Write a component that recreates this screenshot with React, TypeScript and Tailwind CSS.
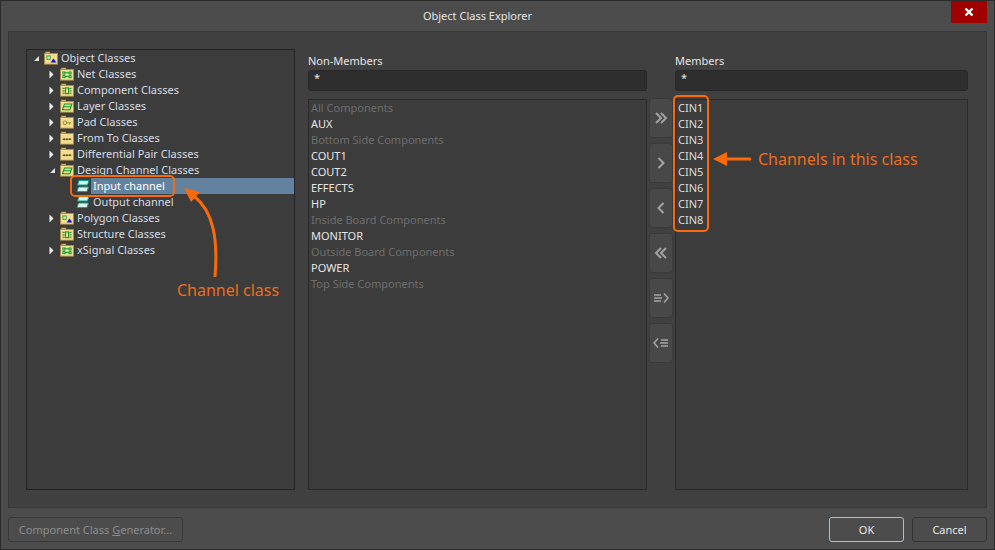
import type { ReactNode } from "react";

const font = "font-['Noto_Sans','Liberation_Sans',sans-serif]";

type Glyph = "poly" | "net" | "comp" | "layer" | "pad" | "fromto";

// little drawings inside the yellow folder icons
function FolderGlyph({ kind }: { kind: Glyph }) {
  if (kind === "poly")
    return (
      <>
        <rect x="3.5" y="5.5" width="4" height="4" fill="#dff5c0" stroke="#089a2a" />
        <path d="M8 13.5 L11.5 8.5 L15 13.5 Z" fill="#1010d0" />
      </>
    );
  if (kind === "net")
    return (
      <>
        <rect x="2" y="4" width="13" height="9.5" fill="#d3e89a" />
        <rect x="3.5" y="5.5" width="2.5" height="2.5" fill="none" stroke="#008a20" />
        <rect x="11" y="5.5" width="2.5" height="2.5" fill="none" stroke="#008a20" />
        <rect x="3.5" y="10" width="2.5" height="2.5" fill="none" stroke="#008a20" />
        <rect x="11" y="10" width="2.5" height="2.5" fill="none" stroke="#008a20" />
        <path d="M6 6.5 H11 M6 11 H11" stroke="#008a20" />
      </>
    );
  if (kind === "comp")
    return (
      <>
        <rect x="6.5" y="5.5" width="4" height="7" fill="none" stroke="#008a20" strokeWidth="1.2" />
        <path d="M3 6 H5.5 M3 9 H5.5 M3 12 H5.5 M11.5 6 H14 M11.5 9 H14 M11.5 12 H14" stroke="#008a20" strokeWidth="1.2" />
      </>
    );
  if (kind === "layer")
    return <path d="M5.5 5.5 H14.5 L12 12.5 H3 Z M4 9 H13.5" fill="none" stroke="#089a2a" strokeWidth="1.3" />;
  if (kind === "pad")
    return (
      <>
        <circle cx="6" cy="9" r="2.2" fill="none" stroke="#8a7a20" />
        <path d="M8 9 H13.5 M11.5 9 V11" stroke="#8a7a20" />
      </>
    );
  return (
    <>
      <path d="M3 9.5 H14" stroke="#6d6420" />
      <rect x="4" y="8.5" width="2" height="2" fill="#4d4a18" />
      <rect x="7.5" y="8.5" width="2" height="2" fill="#4d4a18" />
      <rect x="11" y="8.5" width="2" height="2" fill="#4d4a18" />
    </>
  );
}

function Folder({ kind }: { kind: Glyph }) {
  return (
    <svg width="14" height="14" viewBox="0 0 17 16" className="shrink-0">
      <path d="M1.5 3 V0.5 H7 L8 3 Z" fill="#c9a860" />
      <rect x="0.5" y="2.5" width="16" height="13" fill="#f3dc90" stroke="#a98a42" />
      <FolderGlyph kind={kind} />
    </svg>
  );
}

function ChannelIcon() {
  return (
    <svg width="14" height="12" viewBox="0 0 14 12" className="shrink-0">
      <path d="M3 0.5 H13 L11.5 5 H1.5 Z" fill="#d8f4ee" stroke="#10a08c" />
      <path d="M2.5 7 H12.5 L11 11.5 H1 Z" fill="#d8f4ee" stroke="#10a08c" />
    </svg>
  );
}

function Arrow({ open }: { open?: boolean }) {
  return open ? (
    <svg width="7" height="7" viewBox="0 0 7 7" className="shrink-0">
      <path d="M6 1 V6 H1 Z" fill="#e2e2e2" />
    </svg>
  ) : (
    <svg width="5" height="9" viewBox="0 0 5 9" className="shrink-0">
      <path d="M0.5 0.5 L4.5 4.5 L0.5 8.5 Z" fill="#f0f0f0" />
    </svg>
  );
}

function TreeRow({ label, kind, arrow, open, indent }: { label: string; kind: Glyph; arrow?: boolean; open?: boolean; indent: string }) {
  return (
    <div className={`h-4 flex items-center ${indent}`}>
      <span className="w-[11px] flex items-center">{arrow && <Arrow open={open} />}</span>
      <Folder kind={kind} />
      <span className="ml-[3px] whitespace-nowrap">{label}</span>
    </div>
  );
}

const nonMembers: [string, boolean][] = [
  ["All Components", true],
  ["AUX", false],
  ["Bottom Side Components", true],
  ["COUT1", false],
  ["COUT2", false],
  ["EFFECTS", false],
  ["HP", false],
  ["Inside Board Components", true],
  ["MONITOR", false],
  ["Outside Board Components", true],
  ["POWER", false],
  ["Top Side Components", true],
];

const members = ["CIN1", "CIN2", "CIN3", "CIN4", "CIN5", "CIN6", "CIN7", "CIN8"];

function MoveButton({ children }: { children: ReactNode }) {
  return (
    <button className="w-6 h-10 rounded-[3px] bg-[#484848] border border-[#3a3a3a] flex items-center justify-center">
      <svg width="16" height="14" viewBox="0 0 16 14" fill="none" stroke="#a3a3a3" strokeWidth="2">
        {children}
      </svg>
    </button>
  );
}

function Filter() {
  return (
    <div className="h-[21px] rounded-[3px] bg-[#2e2e2e] border border-[#282828] pl-[5px] text-[#e8e8e8] leading-[14px]">*</div>
  );
}

export default function App() {
  return (
    <div className={`w-[995px] h-[550px] relative overflow-hidden flex flex-col bg-[#4c4c4c] border-x border-b border-[#2b2b2b] text-[11px] text-[#dcdcdc] ${font}`}>
      <div className="h-[31px] shrink-0 relative flex items-center justify-center border-t border-[#2b2b2b] pr-[40px] pt-px text-[#e4e4e4] text-[11px]">
        Object Class Explorer
        <div className="absolute right-[7px] top-0 w-9 h-[22px] bg-[#a00000] flex items-center justify-center">
          <svg width="10" height="10" viewBox="0 0 10 10">
            <path d="M1.5 1.5 L8.5 8.5 M8.5 1.5 L1.5 8.5" stroke="#fff" strokeWidth="2.4" />
          </svg>
        </div>
      </div>

      <div className="mx-[7px] h-[477px] bg-[#404040] border border-[#383838] flex pl-[17px] pt-[17px] pb-[17px] pr-[18px]">
        {/* tree */}
        <div className="w-[269px] h-[441px] shrink-0 border border-[#242424] bg-[#3c3c3c] text-[#d5dce4]">
          <TreeRow label="Object Classes" kind="poly" arrow open indent="pl-[6px]" />
          <TreeRow label="Net Classes" kind="net" arrow indent="pl-[22px]" />
          <TreeRow label="Component Classes" kind="comp" arrow indent="pl-[22px]" />
          <TreeRow label="Layer Classes" kind="layer" arrow indent="pl-[22px]" />
          <TreeRow label="Pad Classes" kind="pad" arrow indent="pl-[22px]" />
          <TreeRow label="From To Classes" kind="fromto" arrow indent="pl-[22px]" />
          <TreeRow label="Differential Pair Classes" kind="fromto" arrow indent="pl-[22px]" />
          <TreeRow label="Design Channel Classes" kind="layer" arrow open indent="pl-[22px]" />
          <div className="h-4 flex items-center pl-[49px]">
            <ChannelIcon />
            <span className="ml-px flex-1 h-4 bg-[#62829f] pl-[2px] text-white leading-4 whitespace-nowrap">Input channel</span>
          </div>
          <div className="h-4 flex items-center pl-[49px]">
            <ChannelIcon />
            <span className="ml-[3px] whitespace-nowrap">Output channel</span>
          </div>
          <TreeRow label="Polygon Classes" kind="poly" arrow indent="pl-[22px]" />
          <TreeRow label="Structure Classes" kind="comp" indent="pl-[22px]" />
          <TreeRow label="xSignal Classes" kind="net" arrow indent="pl-[22px]" />
        </div>

        {/* non members */}
        <div className="w-[339px] ml-[13px] shrink-0 flex flex-col">
          <div className="h-[21px] pt-[4px] leading-4 text-[#e4e4e4]">Non-Members</div>
          <Filter />
          <div className="mt-2 h-[391px] border border-[#2a2a2a] bg-[#3c3c3c] pl-[2px]">
            {nonMembers.map(([name, off]) => (
              <div key={name} className={`h-4 leading-4 ${off ? "text-[#6e6e6e]" : "text-[#e6e6e6]"}`}>{name}</div>
            ))}
          </div>
        </div>

        {/* move buttons */}
        <div className="w-[28px] shrink-0 pt-[49px] flex flex-col items-center gap-[5px]">
          <MoveButton><path d="M3 2 L8 7 L3 12 M8 2 L13 7 L8 12" /></MoveButton>
          <MoveButton><path d="M5.5 2 L10.5 7 L5.5 12" /></MoveButton>
          <MoveButton><path d="M10.5 2 L5.5 7 L10.5 12" /></MoveButton>
          <MoveButton><path d="M8 2 L3 7 L8 12 M13 2 L8 7 L13 12" /></MoveButton>
          <MoveButton><path d="M1 4 H8 M1 7 H9 M1 10 H8 M11 2.5 L15 7 L11 11.5" strokeWidth="1.6" /></MoveButton>
          <MoveButton><path d="M15 4 H8 M15 7 H7 M15 10 H8 M5 2.5 L1 7 L5 11.5" strokeWidth="1.6" /></MoveButton>
        </div>

        {/* members */}
        <div className="w-[293px] shrink-0 flex flex-col">
          <div className="h-[21px] pt-[4px] leading-4 text-[#e4e4e4]">Members</div>
          <Filter />
          <div className="mt-2 h-[391px] border border-[#2a2a2a] bg-[#3c3c3c] pl-[2px]">
            {members.map((name) => (
              <div key={name} className="h-4 leading-4 text-[#dcdcdc]">{name}</div>
            ))}
          </div>
        </div>
      </div>

      <div className="flex-1 flex items-start pt-[9px] pl-[7px] pr-[7px]">
        <button className="w-[175px] h-[25px] pt-px rounded-[3px] border border-[#383838] text-[#8c8c8c]">
          Component Class <span className="underline">G</span>enerator...
        </button>
        <button className="ml-auto w-[75px] h-[25px] pt-px rounded-[3px] border border-[#9cc3e6] text-[#e8e8e8]">OK</button>
        <button className="ml-2 w-[75px] h-[25px] pt-px rounded-[3px] border border-[#333333] text-[#e8e8e8]">Cancel</button>
      </div>

      {/* orange callouts */}
      <div className="absolute left-[69px] top-[175px] w-[105px] h-[22px] rounded-[5px] border-2 border-[#f96a0a]" />
      <div className="absolute left-[672px] top-[95px] w-[36px] h-[137px] rounded-[5px] border-2 border-[#f96a0a]" />
      <svg className="absolute left-[169px] top-[180px]" width="60" height="100" viewBox="0 0 60 100" fill="none">
        <path d="M45 97 C48 60 44 32 24 16" stroke="#f96a0a" strokeWidth="3" />
        <path d="M14 8 L30 12 L21 22 Z" fill="#f96a0a" />
      </svg>
      <svg className="absolute left-[711px] top-[151px]" width="40" height="16" viewBox="0 0 40 16">
        <path d="M14 8 H39" stroke="#f96a0a" strokeWidth="3" />
        <path d="M1 8 L15 1 V15 Z" fill="#f96a0a" />
      </svg>
      <div className="absolute left-[176px] top-[279px] text-base leading-[22px] text-[#ee6c1c]">Channel class</div>
      <div className="absolute left-[757px] top-[148px] text-base leading-[22px] text-[#ee6c1c] whitespace-nowrap">Channels in this class</div>
    </div>
  );
}
